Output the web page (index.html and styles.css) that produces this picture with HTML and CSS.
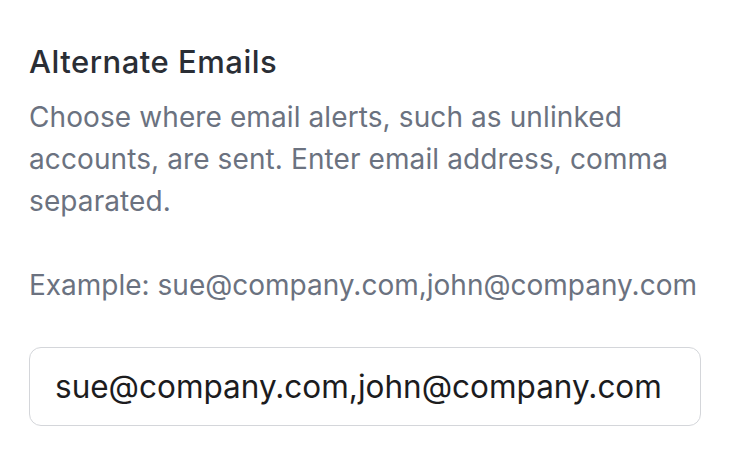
FILE: index.html
```html
<!DOCTYPE html>
<html>
<head>
<meta charset="utf-8">
<link rel="stylesheet" href="styles.css">
</head>
<body>
<section class="setting">
  <h2 class="title">Alternate Emails</h2>
  <p class="desc">Choose where email alerts, such as unlinked accounts, are sent. Enter email address, comma separated.</p>
  <p class="example">Example: sue@company.com,john@company.com</p>
  <div class="field">sue@company.com,john@company.com</div>
</section>
</body>
</html>
```
FILE: styles.css
```css
html, body {
  margin: 0;
  padding: 0;
  background: #ffffff;
}
body {
  font-family: Inter, "Noto Sans", sans-serif;
}
.setting {
  padding: 44px 41px 0 29px;
  display: flex;
  flex-direction: column;
}
.title {
  margin: 0;
  font-size: 31px;
  font-weight: 500;
  line-height: 36px;
  letter-spacing: 0.5px;
  color: #2a2e35;
}
.desc {
  margin: 16px 0 0;
  font-size: 28px;
  line-height: 42px;
  letter-spacing: 0.1px;
  color: #6b7280;
}
.example {
  margin: 42px 0 0;
  font-size: 28px;
  line-height: 42px;
  color: #6b7280;
}
.field {
  margin-top: 41px;
  border: 1.5px solid #d4d6da;
  border-radius: 12px;
  height: 77px;
  display: flex;
  align-items: center;
  padding: 0 25px;
  font-size: 31.5px;
  color: #1c1c1e;
}
```
